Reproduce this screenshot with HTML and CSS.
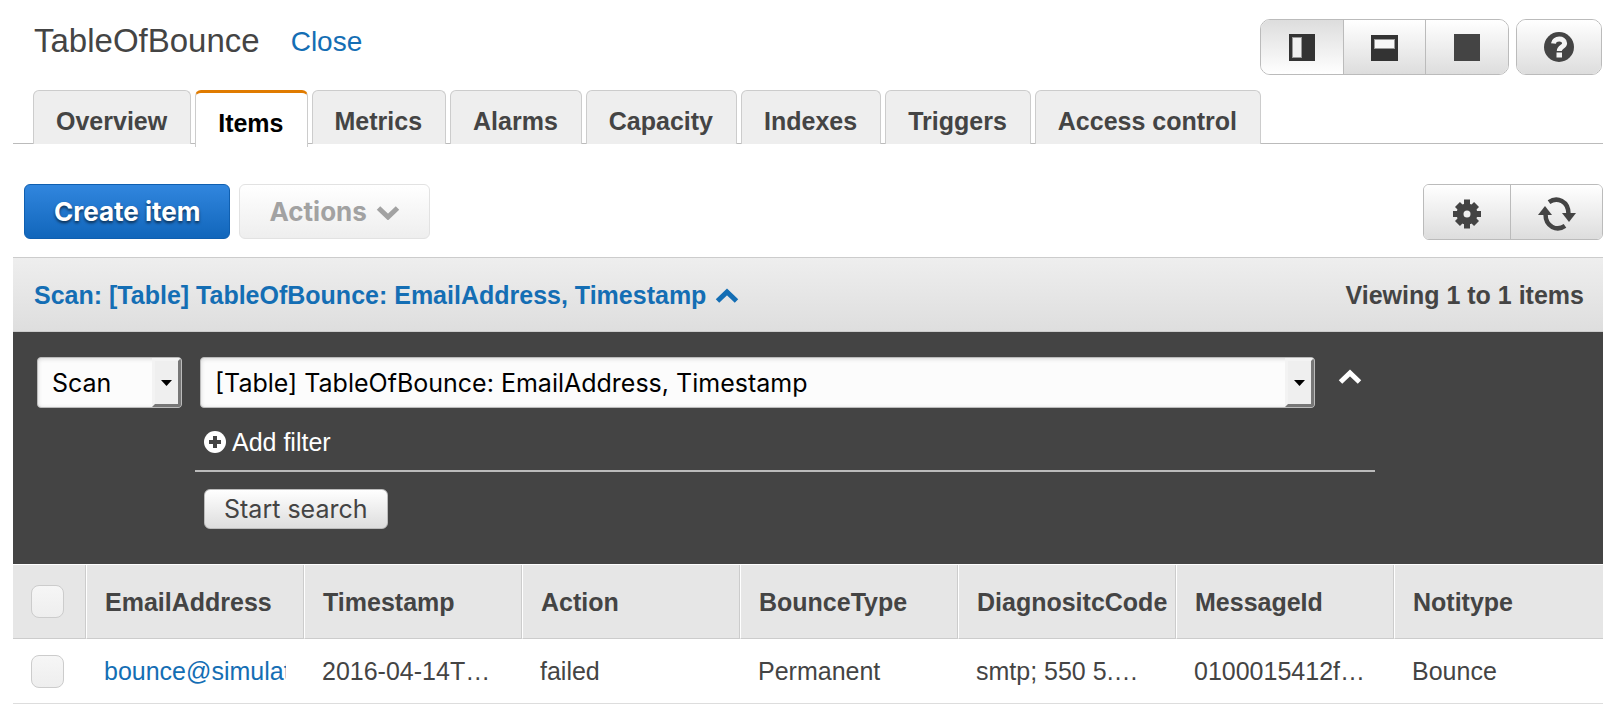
FILE: index.html
```html
<!DOCTYPE html>
<html lang="en">

<head>
    <meta charset="UTF-8">
    <meta name="viewport" content="width=device-width, initial-scale=1.0">
    <title>TableOfBounce</title>
    <link rel="stylesheet" href="styles.css">
</head>

<body>
    <!-- Header -->
    <header class="header">
        <h1 class="title">TableOfBounce</h1>
        <a class="close-link" href="#">Close</a>
        <div class="btn-group layout-buttons">
            <button class="btn-icon selected" type="button" aria-label="Split vertically">
                <svg width="26" height="27" viewBox="0 0 26 27">
                    <rect width="26" height="27" fill="#333" />
                    <rect x="3.5" y="3.5" width="9" height="20" fill="#f0f0f0" stroke="#999" />
                </svg>
            </button>
            <button class="btn-icon" type="button" aria-label="Split horizontally">
                <svg width="27" height="27" viewBox="0 0 27 27">
                    <rect y="1" width="27" height="26" fill="#333" />
                    <rect x="3.5" y="5.5" width="20" height="9" fill="#f8f8f8" stroke="#999" />
                </svg>
            </button>
            <button class="btn-icon" type="button" aria-label="Full pane">
                <svg width="26" height="27" viewBox="0 0 26 27">
                    <rect width="26" height="27" fill="#444" />
                </svg>
            </button>
        </div>
        <div class="btn-group help-button">
            <button class="btn-icon" type="button" aria-label="Help">
                <svg width="30" height="30" viewBox="0 0 30 30">
                    <circle cx="15" cy="15" r="15" fill="#444" />
                    <path d="M9.5 11.5C9.8 5.8 20.6 5.6 20.6 11.2C20.6 15 15.3 14.6 15.3 19" fill="none" stroke="#f5f5f5" stroke-width="5" />
                    <rect x="12.5" y="20.5" width="5.5" height="5" fill="#f5f5f5" />
                </svg>
            </button>
        </div>
    </header>

    <!-- Tabs -->
    <nav class="tabs">
        <a class="tab" href="#">Overview</a>
        <a class="tab active" href="#">Items</a>
        <a class="tab" href="#">Metrics</a>
        <a class="tab" href="#">Alarms</a>
        <a class="tab" href="#">Capacity</a>
        <a class="tab" href="#">Indexes</a>
        <a class="tab" href="#">Triggers</a>
        <a class="tab" href="#">Access control</a>
    </nav>

    <main>
        <!-- Toolbar -->
        <div class="toolbar">
            <button class="btn btn-primary" type="button">Create item</button>
            <button class="btn btn-disabled" type="button" disabled>
                Actions
                <svg width="24" height="16" viewBox="0 0 24 16">
                    <path d="M2.5 4L12 13L21.5 4" fill="none" stroke="currentColor" stroke-width="5" />
                </svg>
            </button>
            <div class="btn-group table-buttons">
                <button class="btn-icon" type="button" aria-label="Settings">
                    <svg width="28" height="30" viewBox="-14 -15 28 30">
                        <g fill="#444">
                            <rect x="-3" y="-14.5" width="6" height="29" />
                            <rect x="-14" y="-3" width="28" height="6" />
                            <rect x="-3.5" y="-13.5" width="7" height="27" transform="rotate(45)" />
                            <rect x="-3.5" y="-13.5" width="7" height="27" transform="rotate(-45)" />
                        </g>
                        <circle r="7" fill="none" stroke="#444" stroke-width="7" />
                        <circle r="3.5" fill="#f0f0f0" />
                    </svg>
                </button>
                <button class="btn-icon" type="button" aria-label="Refresh">
                    <svg width="38" height="34" viewBox="0 0 38 34">
                        <g fill="none" stroke="#444" stroke-width="4.5">
                            <path d="M11 5.2C19 -0.5 30.5 4 30.5 17" />
                            <path d="M27 28.8C19 34.5 7.500 30 7.500 17" />
                        </g>
                        <path d="M24 16H38L31 25Z" fill="#444" />
                        <path d="M0 18H14L7 9Z" fill="#444" />
                    </svg>
                </button>
            </div>
        </div>

        <!-- Query summary -->
        <div class="summary">
            <a class="summary-link" href="#">
                Scan: [Table] TableOfBounce: EmailAddress, Timestamp
                <svg width="24" height="16" viewBox="0 0 24 16">
                    <path d="M2.5 14L12 5L21.5 14" fill="none" stroke="currentColor" stroke-width="5" />
                </svg>
            </a>
            <span>Viewing 1 to 1 items</span>
        </div>

        <!-- Query form -->
        <form class="query">
            <div class="select-box mode">
                <select aria-label="Operation">
                    <option>Scan</option>
                </select>
            </div>
            <div class="query-body">
                <div class="query-target">
                    <div class="select-box target">
                        <select aria-label="Table or index">
                            <option>[Table] TableOfBounce: EmailAddress, Timestamp</option>
                        </select>
                    </div>
                    <button class="collapse" type="button" aria-label="Collapse">
                        <svg width="24" height="16" viewBox="0 0 24 16">
                            <path d="M2.5 13L12 4L21.5 13" fill="none" stroke="currentColor" stroke-width="5" />
                        </svg>
                    </button>
                </div>
                <button class="add-filter" type="button">
                    <svg width="22" height="22" viewBox="0 0 22 22">
                        <circle cx="11" cy="11" r="11" fill="#fff" />
                        <path d="M11 5V17M5 11H17" stroke="#444" stroke-width="4" />
                    </svg>
                    Add filter
                </button>
                <div class="query-actions">
                    <button class="btn-search" type="button">Start search</button>
                </div>
            </div>
        </form>

        <!-- Items -->
        <table class="items">
            <thead>
                <tr>
                    <th class="check"><input type="checkbox" aria-label="Select all"></th>
                    <th>EmailAddress</th>
                    <th>Timestamp</th>
                    <th>Action</th>
                    <th>BounceType</th>
                    <th>DiagnositcCode</th>
                    <th>MessageId</th>
                    <th class="last">Notitype</th>
                </tr>
            </thead>
            <tbody>
                <tr>
                    <td class="check"><input type="checkbox" aria-label="Select item"></td>
                    <td><a class="item-link" href="#">bounce@simulat</a></td>
                    <td>2016-04-14T…</td>
                    <td>failed</td>
                    <td>Permanent</td>
                    <td>smtp; 550 5.…</td>
                    <td>0100015412f…</td>
                    <td>Bounce</td>
                </tr>
            </tbody>
        </table>
    </main>
</body>

</html>
```
FILE: styles.css
```css
/* Base Styles */
* {
    box-sizing: border-box;
}

body {
    margin: 0;
    padding: 19px 5px 0 13px;
    background-color: #fff;
    color: #444;
    font-family: "Liberation Sans", Arial, sans-serif;
    font-size: 25px;
    line-height: 30px;
}

a {
    color: #146eb4;
    text-decoration: none;
}

button,
select {
    font-family: Inter, sans-serif;
    font-size: 25px;
    line-height: 30px;
    color: #444;
    cursor: pointer;
}

svg {
    display: block;
    flex: none;
}

/* Header */
.header {
    display: flex;
    align-items: flex-start;
    padding-left: 21px;
    margin-bottom: 15px;
}

.title {
    margin: 0;
    font-size: 33px;
    font-weight: normal;
    line-height: 44px;
}

.close-link {
    margin-left: 31px;
    font-size: 28px;
    line-height: 46px;
}

.btn-group {
    display: flex;
    border: 1px solid #bbb;
    border-radius: 10px;
    overflow: hidden;
}

.btn-icon {
    display: flex;
    align-items: center;
    justify-content: center;
    width: 82px;
    height: 54px;
    padding: 0;
    border: none;
    border-left: 1px solid #bbb;
    background: linear-gradient(#fff, #ddd);
}

.btn-icon:first-child {
    border-left: none;
}

.btn-icon.selected {
    background: linear-gradient(#ddd, #fff);
}

.layout-buttons {
    margin-left: auto;
}

.layout-buttons .btn-icon:last-child {
    width: 83px;
}

.help-button {
    margin-left: 7px;
    margin-right: 1px;
}

.help-button .btn-icon {
    width: 84px;
}

/* Tabs */
.tabs {
    display: flex;
    align-items: flex-start;
    gap: 4px;
    padding-left: 20px;
    border-bottom: 1px solid #bbb;
}

.tab {
    margin-bottom: -1px;
    padding: 15px 23px 8px 22px;
    border: 1px solid #ccc;
    border-bottom: none;
    border-radius: 6px 6px 0 0;
    background-color: #eee;
    color: #444;
    font-weight: bold;
}

.tab.active {
    margin-bottom: -4px;
    padding-bottom: 9px;
    border-top: 3px solid #e07b00;
    background-color: #fff;
    color: #000;
}

/* Toolbar */
.toolbar {
    display: flex;
    gap: 9px;
    margin: 40px 0 17px;
    padding-left: 11px;
}

.btn {
    display: flex;
    align-items: center;
    gap: 9px;
    height: 55px;
    padding: 0 29px;
    border-radius: 6px;
    font-size: 26px;
    font-weight: bold;
}

.btn-primary {
    border: 1px solid #0f5fb0;
    background: linear-gradient(#3186de, #1166bb);
    color: #fff;
    text-shadow: 0 2px 3px rgba(0, 0, 0, 0.6);
}

.btn-disabled {
    border: 1px solid #e2e2e2;
    background: linear-gradient(#fff, #eee);
    color: #a2a2a2;
    cursor: default;
}

.table-buttons {
    margin-left: auto;
    border-radius: 6px;
}

.table-buttons .btn-icon {
    width: 86px;
    padding-top: 3px;
}

.table-buttons .btn-icon:last-child {
    width: 92px;
}

/* Query summary */
.summary {
    display: flex;
    align-items: center;
    justify-content: space-between;
    height: 75px;
    padding: 0 19px 0 21px;
    border-top: 1px solid #ccc;
    border-bottom: 1px solid #ccc;
    background: linear-gradient(#eee, #dedede);
    font-weight: bold;
}

.summary-link {
    display: flex;
    align-items: center;
    gap: 9px;
}

/* Query form */
.query {
    display: flex;
    align-items: flex-start;
    gap: 13px;
    padding: 25px 228px 35px 24px;
    background-color: #444;
}

.select-box {
    position: relative;
    height: 51px;
}

.select-box select {
    width: 100%;
    height: 100%;
    padding: 0 32px 0 14px;
    border: 1px solid #bbb;
    border-radius: 4px;
    appearance: none;
    background-color: #fcfcfc;
    box-shadow: inset 0 1px 4px rgba(0, 0, 0, 0.15);
    color: #000;
}

/* Bevelled drop-down arrow over the select */
.select-box::after {
    content: "";
    position: absolute;
    top: 1px;
    right: 1px;
    bottom: 1px;
    width: 23px;
    border: 3px solid #f3f3f3;
    border-right-color: #777;
    border-bottom-color: #777;
    border-radius: 0 3px 3px 0;
    background: #efefef url("data:image/svg+xml,%3Csvg xmlns='http://www.w3.org/2000/svg' width='11' height='6'%3E%3Cpath d='M0 0H11L5.5 6Z'/%3E%3C/svg%3E") no-repeat center;
    pointer-events: none;
}

.mode {
    width: 145px;
}

.target {
    flex: 1;
}

.query-body {
    flex: 1;
}

.query-target {
    display: flex;
    padding: 0 13px 0 5px;
}

.collapse {
    height: 40px;
    margin-left: 23px;
    padding: 0;
    border: none;
    background: none;
    color: #fff;
}

.add-filter {
    display: flex;
    align-items: center;
    gap: 6px;
    margin: 19px 0 13px 9px;
    padding: 0;
    border: none;
    background: none;
    color: #fff;
    font-family: "Liberation Sans", Arial, sans-serif;
}

.query-actions {
    padding: 17px 9px 0;
    border-top: 2px solid #bbb;
}

.btn-search {
    height: 40px;
    padding: 0 19px;
    border: 1px solid #bbb;
    border-radius: 6px;
    background: linear-gradient(#fff, #ddd);
}

/* Items table */
.items {
    width: 100%;
    table-layout: fixed;
    border-collapse: separate;
    border-spacing: 0;
    border-top: 1px solid #fff;
}

.items th,
.items td {
    overflow: hidden;
    text-align: left;
    white-space: nowrap;
}

.items th {
    width: 218px;
    height: 74px;
    padding: 0 0 0 18px;
    border-left: 1px solid #fff;
    border-right: 1px solid #ccc;
    border-bottom: 1px solid #ccc;
    background-color: #e6e6e6;
}

.items td {
    height: 65px;
    padding: 0 18px;
    border-bottom: 1px solid #ddd;
}

.items th.check,
.items td.check {
    width: 73px;
    padding: 0 0 0 18px;
    border-left: none;
}

.items th.last {
    width: auto;
    border-right: none;
}

.item-link {
    display: block;
    overflow: hidden;
}

.check input {
    display: block;
    width: 33px;
    height: 33px;
    margin: 0;
    border: 1px solid #ccc;
    border-radius: 8px;
    appearance: none;
    background: linear-gradient(#f6f6f6, #eee);
}
```
